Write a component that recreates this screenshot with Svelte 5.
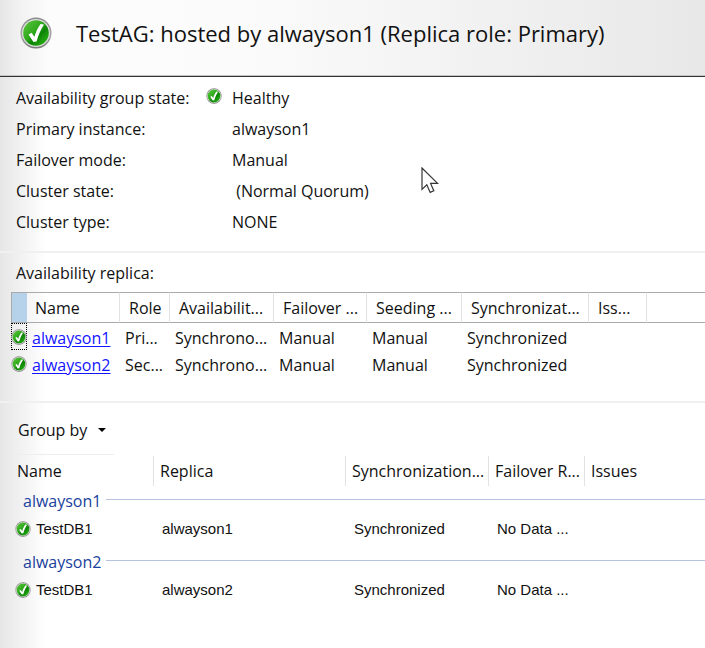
<script lang="ts">
	type Replica = {
		name: string;
		cells: string[];
	};

	type Group = {
		name: string;
		databases: { name: string; cells: string[] }[];
	};

	const details = [
		{ label: 'Availability group state:', value: 'Healthy', healthy: true },
		{ label: 'Primary instance:', value: 'alwayson1' },
		{ label: 'Failover mode:', value: 'Manual' },
		{ label: 'Cluster state:', value: '\u00a0(Normal Quorum)' },
		{ label: 'Cluster type:', value: 'NONE' }
	];

	const replicaColumns = [
		'Name',
		'Role',
		'Availabilit...',
		'Failover ...',
		'Seeding ...',
		'Synchronizat...',
		'Iss...'
	];

	const replicas: Replica[] = [
		{ name: 'alwayson1', cells: ['Pri...', 'Synchrono...', 'Manual', 'Manual', 'Synchronized', ''] },
		{ name: 'alwayson2', cells: ['Sec...', 'Synchrono...', 'Manual', 'Manual', 'Synchronized', ''] }
	];

	const databaseColumns = ['Name', 'Replica', 'Synchronization...', 'Failover R...', 'Issues'];

	const groups: Group[] = [
		{
			name: 'alwayson1',
			databases: [{ name: 'TestDB1', cells: ['alwayson1', 'Synchronized', 'No Data ...', ''] }]
		},
		{
			name: 'alwayson2',
			databases: [{ name: 'TestDB1', cells: ['alwayson2', 'Synchronized', 'No Data ...', ''] }]
		}
	];

	let selected = $state(0);
</script>

{#snippet check()}
	<svg class="check" viewBox="0 0 32 32" aria-hidden="true">
		<circle cx="16" cy="16" r="15.5" fill="url(#rim)" />
		<circle cx="16" cy="16" r="14" fill="#dedede" />
		<circle cx="16" cy="16" r="12.8" fill="url(#face)" />
		<path
			d="M8.6 17.6 L11.6 15.8 L14.4 19.8 C15.8 14.8 18 10.6 20.6 7 L24 7.4 C20.8 12.4 18.4 18 16.6 24.4 L13.4 25 Z"
			fill="#fff"
		/>
	</svg>
{/snippet}

<div class="dashboard">
	<svg class="defs" width="0" height="0" aria-hidden="true">
		<defs>
			<linearGradient id="rim" x1="0" y1="0" x2="0" y2="1">
				<stop offset="0" stop-color="#8a8a8a" />
				<stop offset="0.6" stop-color="#a6a6a6" />
				<stop offset="1" stop-color="#777" />
			</linearGradient>
			<linearGradient id="face" x1="0" y1="0" x2="1" y2="1">
				<stop offset="0" stop-color="#5cc83c" />
				<stop offset="0.45" stop-color="#2fa81c" />
				<stop offset="0.6" stop-color="#0c8205" />
				<stop offset="1" stop-color="#35c41c" />
			</linearGradient>
		</defs>
	</svg>

	<header>
		{@render check()}
		<h1>TestAG: hosted by alwayson1 (Replica role: Primary)</h1>
	</header>

	<dl class="details">
		{#each details as row}
			<div class="detail">
				<dt>{row.label}</dt>
				<dd class="state">{#if row.healthy}{@render check()}{/if}</dd>
				<dd>{row.value}</dd>
			</div>
		{/each}
	</dl>

	<section class="replicas">
		<h2 id="replica-title">Availability replica:</h2>
		<table aria-labelledby="replica-title">
			<colgroup>
				<col class="r-icon" />
				<col class="r-name" />
				<col class="r-role" />
				<col class="r-mode" />
				<col class="r-failover" />
				<col class="r-seeding" />
				<col class="r-sync" />
				<col class="r-issues" />
				<col />
			</colgroup>
			<thead>
				<tr>
					<th class="corner" aria-label="State"></th>
					{#each replicaColumns as column}
						<th>{column}</th>
					{/each}
					<th class="rest"></th>
				</tr>
			</thead>
			<tbody>
				{#each replicas as replica, i}
					<tr onclick={() => (selected = i)}>
						<td class="icon" class:focused={selected === i}>{@render check()}</td>
						<td><a href="#{replica.name}">{replica.name}</a></td>
						{#each replica.cells as cell}
							<td>{cell}</td>
						{/each}
						<td></td>
					</tr>
				{/each}
			</tbody>
		</table>
	</section>

	<section class="databases">
		<div class="toolbar">
			<button type="button">
				Group by
				<svg class="caret" viewBox="0 0 8 4" aria-hidden="true"><path d="M0 0H8L4 4Z" /></svg>
			</button>
		</div>
		<table aria-label="Databases">
			<colgroup>
				<col class="d-name" />
				<col class="d-replica" />
				<col class="d-sync" />
				<col class="d-failover" />
				<col />
			</colgroup>
			<thead>
				<tr>
					{#each databaseColumns as column}
						<th>{column}</th>
					{/each}
				</tr>
			</thead>
			{#each groups as group}
				<tbody>
					<tr class="group">
						<th colspan="5"><div>{group.name}</div></th>
					</tr>
					{#each group.databases as database}
						<tr class="database">
							<td><div class="db">{@render check()}{database.name}</div></td>
							{#each database.cells as cell}
								<td>{cell}</td>
							{/each}
						</tr>
					{/each}
				</tbody>
			{/each}
		</table>
	</section>

	<svg class="pointer" viewBox="0 0 18 27" aria-hidden="true">
		<path
			d="M1 1V22.4L5.8 17.8L9.2 25.4L12.8 23.8L9.6 16.4H16.6Z"
			fill="#fff"
			stroke="#333"
			stroke-width="1.2"
		/>
	</svg>
</div>

<style>
	:global(body) {
		margin: 0;
	}

	.dashboard {
		position: relative;
		min-height: 100vh;
		overflow: hidden;
		background: linear-gradient(90deg, #e6e6e6 0, #f2f2f2 22px, #fff 46px);
		color: #111;
		font: 16px/20px 'Open Sans', 'Noto Sans', sans-serif;
	}

	.defs {
		position: absolute;
	}

	.check {
		display: block;
		flex: none;
		width: 16px;
		height: 16px;
	}

	header {
		display: flex;
		align-items: center;
		gap: 24px;
		height: 66px;
		padding: 0 20px 10px;
		border-bottom: 1px solid #333;
		box-shadow: inset 0 -1px #c4c4c4;
		background: linear-gradient(90deg, #e6e6e6 0, #f3f3f3 22px, #fcfcfc 50px, #fbfbfb 35%, #e8e8e8 100%);
	}

	header .check {
		width: 32px;
		height: 32px;
	}

	h1 {
		margin: 0;
		font-size: 22px;
		line-height: 30px;
		font-weight: 400;
		white-space: nowrap;
	}

	.details {
		margin: 0;
		padding: 5px 16px 14px;
		border-bottom: 2px solid #f0f0f0;
	}

	.detail {
		display: grid;
		grid-template-columns: 190px 26px 1fr;
		align-items: center;
		height: 31px;
		white-space: nowrap;
	}

	.state {
		padding-bottom: 4px;
	}

	dd {
		margin: 0;
	}

	h2 {
		margin: 0;
		padding: 10px 5px 9px;
		font-size: 16px;
		line-height: 20px;
		font-weight: 400;
	}

	table {
		width: 100%;
		table-layout: fixed;
		border-collapse: separate;
		border-spacing: 0;
	}

	th,
	td {
		padding: 0;
		font-weight: 400;
		text-align: left;
		white-space: nowrap;
	}

	.replicas {
		padding-left: 11px;
		border-bottom: 2px solid #f0f0f0;
	}

	.replicas table {
		margin-bottom: 24px;
	}

	.replicas th {
		height: 29px;
		padding-left: 9px;
		border-top: 1px solid #aaa;
		border-bottom: 1px solid #aaa;
		border-right: 1px solid #e2e2e2;
		background: #fff;
	}

	.replicas th:nth-child(2) {
		padding-left: 8px;
		background: linear-gradient(90deg, #f5f5f5, #fff 20px);
	}

	.replicas .corner {
		padding: 0;
		border-left: 1px solid #aaa;
		border-right: 0;
		background: #b5d2ea;
	}

	.replicas .rest {
		border-right: 0;
	}

	.replicas td {
		height: 25px;
		padding: 2px 0 0 5px;
	}

	.replicas .icon {
		padding: 0;
		border: 1px solid transparent;
	}

	.replicas .icon.focused {
		border: 1px dotted #000;
	}

	.icon .check {
		margin: 0 -1px;
	}

	a {
		color: #1414ff;
		text-underline-offset: 2px;
	}

	.r-icon {
		width: 16px;
	}

	.r-name {
		width: 93px;
	}

	.r-role {
		width: 50px;
	}

	.r-mode {
		width: 104px;
	}

	.r-failover {
		width: 93px;
	}

	.r-seeding {
		width: 95px;
	}

	.r-sync {
		width: 127px;
	}

	.r-issues {
		width: 58px;
	}

	.databases {
		padding: 14px 0 0 11px;
	}

	.toolbar {
		width: 103px;
		padding-bottom: 11px;
		border-bottom: 1px solid #eee;
	}

	button {
		display: flex;
		align-items: center;
		gap: 11px;
		padding: 0 7px;
		border: 0;
		background: none;
		color: inherit;
		font: inherit;
		line-height: 26px;
		white-space: nowrap;
	}

	.caret {
		width: 8px;
		height: 4px;
	}

	.databases table {
		margin-top: 1px;
	}

	.databases thead th {
		height: 30px;
		padding-left: 6px;
		border-right: 1px solid #e2e2e2;
	}

	.databases thead th:last-child {
		border-right: 0;
	}

	.group th {
		height: 30px;
		padding-left: 12px;
		color: #1a3f9c;
	}

	.group div {
		display: flex;
		align-items: center;
		gap: 5px;
	}

	.group div::after {
		content: '';
		flex: 1;
		height: 1px;
		margin-bottom: 3px;
		background: #b4c2e0;
	}

	.database td {
		height: 25px;
		padding: 0 0 6px 8px;
		font-family: 'Liberation Sans', Arial, sans-serif;
		font-size: 15px;
	}

	.database td:first-child {
		padding-left: 4px;
	}

	.db {
		display: flex;
		align-items: center;
		gap: 5px;
	}

	.d-name {
		width: 143px;
	}

	.d-replica {
		width: 192px;
	}

	.d-sync {
		width: 143px;
	}

	.d-failover {
		width: 96px;
	}

	.pointer {
		position: absolute;
		top: 167px;
		left: 421px;
		width: 18px;
		height: 27px;
		pointer-events: none;
	}
</style>
